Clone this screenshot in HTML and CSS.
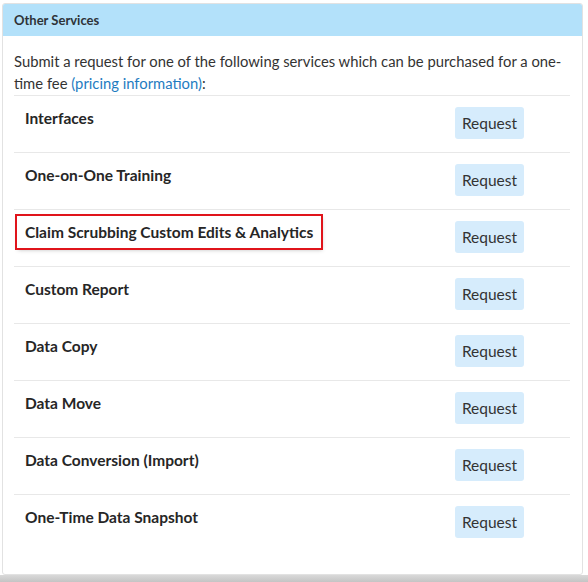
FILE: index.html
```html
<!DOCTYPE html>
<html lang="en">
<head>
<meta charset="utf-8">
<title>Other Services</title>
<link rel="stylesheet" href="styles.css">
</head>
<body>
<div class="panel">
  <div class="panel-header">Other Services</div>
  <div class="panel-body">
    <p class="intro">Submit a request for one of the following services which can be purchased for a one-time fee <a href="#" class="link">(pricing information)</a>:</p>
    <div class="services">
      <div class="row"><span class="label">Interfaces</span><button class="btn">Request</button></div>
      <div class="row"><span class="label">One-on-One Training</span><button class="btn">Request</button></div>
      <div class="row"><span class="label highlight">Claim Scrubbing Custom Edits &amp; Analytics</span><button class="btn">Request</button></div>
      <div class="row"><span class="label">Custom Report</span><button class="btn">Request</button></div>
      <div class="row"><span class="label">Data Copy</span><button class="btn">Request</button></div>
      <div class="row"><span class="label">Data Move</span><button class="btn">Request</button></div>
      <div class="row"><span class="label">Data Conversion (Import)</span><button class="btn">Request</button></div>
      <div class="row last"><span class="label">One-Time Data Snapshot</span><button class="btn">Request</button></div>
    </div>
  </div>
</div>
<div class="bottom-strip"></div>
</body>
</html>
```
FILE: styles.css
```css
html, body {
  margin: 0;
  padding: 0;
  background: #ffffff;
}
body {
  font-family: Lato, "Liberation Sans", sans-serif;
  color: #333333;
  padding: 3px 5px 0 2px;
  height: 582px;
  box-sizing: border-box;
  display: flex;
  flex-direction: column;
}
.panel {
  border: 1px solid #e2e2e2;
  border-radius: 3px;
  height: 572px;
  box-sizing: border-box;
  overflow: hidden;
  flex: none;
}
.panel-header {
  background: #b3e1fa;
  height: 32px;
  line-height: 32px;
  padding-left: 11px;
  font-size: 13px;
  font-weight: 700;
  color: #2e3338;
}
.panel-body {
  padding: 14px 12px 0 11px;
}
.intro {
  margin: 0;
  font-size: 14.8px;
  line-height: 22px;
  padding-bottom: 1px;
}
.link {
  color: #1f7cc1;
  text-decoration: none;
}
.services {
  display: flex;
  flex-direction: column;
}
.row {
  display: flex;
  align-items: flex-start;
  justify-content: space-between;
  height: 57px;
  box-sizing: border-box;
  border-top: 1px solid #e8e8e8;
  padding: 0 46px 0 11px;
}
.label {
  font-size: 15.5px;
  font-weight: 700;
  line-height: 20px;
  margin-top: 12px;
  color: #262626;
}
.label.highlight {
  outline: 2px solid #e0141b;
  outline-offset: 0;
  padding: 6px 8px;
  margin: 6px 0 0 -8px;
  box-shadow: 1px 2px 4px rgba(0,0,0,0.25);
}
.btn {
  margin-top: 11px;
  height: 32px;
  width: 69px;
  border: none;
  border-radius: 3px;
  background: #d6ecfc;
  color: #333333;
  font-family: Lato, "Liberation Sans", sans-serif;
  font-size: 15.5px;
  padding: 0;
}
.bottom-strip {
  margin: 0 -5px 0 -2px;
  flex: 1;
  background: linear-gradient(#d9d9d9, #c4c4c4);
}
```
